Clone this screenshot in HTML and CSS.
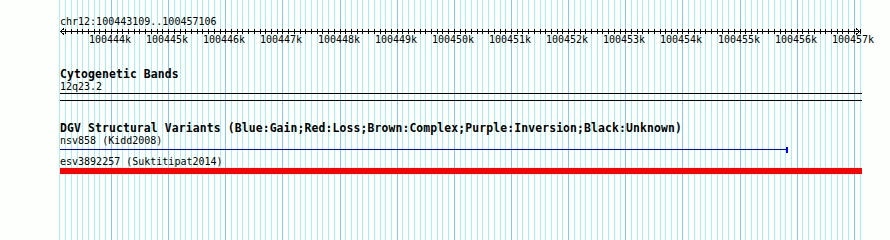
FILE: index.html
```html
<!DOCTYPE html>
<html>
<head>
<meta charset="utf-8">
<link rel="stylesheet" href="styles.css">
</head>
<body>
<div class="page">
  <svg class="grid" id="grid" width="890" height="240"></svg>
  <div class="content">
    <div class="seg">chr12:100443109..100457106</div>
    <div class="ruler">
      <svg class="axis" id="axis" width="802" height="8"></svg>
      <div class="labels" id="labels"></div>
    </div>
    <section class="track cyto">
      <div class="track-title">Cytogenetic Bands</div>
      <div class="feat-label band-label">12q23.2</div>
      <div class="band"></div>
    </section>
    <section class="track dgv">
      <div class="track-title">DGV Structural Variants (Blue:Gain;Red:Loss;Brown:Complex;Purple:Inversion;Black:Unknown)</div>
      <div class="feat-label first">nsv858 (Kidd2008)</div>
      <div class="gain"><div class="gain-line"></div><div class="gain-end"></div></div>
      <div class="feat-label second">esv3892257 (Suktitipat2014)</div>
      <div class="loss"></div>
    </section>
  </div>
</div>
<script src="script.js"></script>
</body>
</html>
```
FILE: styles.css
```css
html, body {
  margin: 0;
  padding: 0;
  background: #fcfffc;
}
.page {
  position: relative;
  width: 890px;
  height: 240px;
  overflow: hidden;
  background: #fcfffc;
  font-family: "DejaVu Sans Mono", "Liberation Mono", monospace;
  font-size: 10px;
  color: #000;
}
.grid {
  position: absolute;
  left: 0;
  top: 0;
  shape-rendering: crispEdges;
}
.content {
  position: relative;
  padding: 15px 0 0 60px;
}
.seg {
  height: 13px;
  line-height: 13px;
  white-space: nowrap;
}
.ruler {
  position: relative;
  width: 800px;
  height: 20px;
}
.axis {
  display: block;
  shape-rendering: crispEdges;
  overflow: visible;
}
.labels {
  position: absolute;
  left: 0;
  top: 5px;
  width: 800px;
  height: 13px;
}
.tick-label {
  position: absolute;
  top: 0;
  line-height: 13px;
  white-space: nowrap;
  transform: translateX(-50%);
}
.track {
  display: flex;
  flex-direction: column;
  align-items: flex-start;
}
.cyto {
  margin-top: 21px;
}
.dgv {
  margin-top: 22px;
}
.track-title {
  font-weight: bold;
  font-size: 11.4px;
  letter-spacing: 0.13px;
  height: 10px;
  line-height: 10px;
  white-space: nowrap;
}
.feat-label {
  height: 11px;
  line-height: 11px;
  white-space: nowrap;
}
.feat-label.band-label {
  margin-top: 2px;
}
.feat-label.first {
  margin-top: 2px;
}
.feat-label.second {
  margin-top: 3px;
}
.band {
  margin-top: 1px;
  width: 802px;
  height: 6px;
  border-top: 1px solid #000;
  border-bottom: 1px solid #000;
}
.gain {
  display: flex;
  align-items: flex-start;
  margin-top: 1px;
  height: 6px;
}
.gain-line {
  width: 726px;
  height: 1px;
  margin-top: 2px;
  background: #0000ff;
}
.gain-end {
  width: 2px;
  height: 6px;
  background: #0000ff;
}
.loss {
  margin-top: 1px;
  width: 802px;
  height: 6px;
  background: #ff0000;
}
```
FILE: script.js
```js
(function () {
  var NS = "http://www.w3.org/2000/svg";
  var start = 100443109, scale = 800 / 13998;
  function X(p) { return Math.round(60 + (p - start) * scale); }
  function el(name, attrs) {
    var e = document.createElementNS(NS, name);
    for (var k in attrs) e.setAttribute(k, attrs[k]);
    return e;
  }
  var grid = document.getElementById("grid");
  for (var p = 100443100; p <= 100457100; p += 100) {
    var major = p % 1000 === 0;
    grid.appendChild(el("line", {
      x1: X(p) + 0.5, x2: X(p) + 0.5, y1: 0, y2: 240,
      stroke: major ? "#87c8f0" : "#aaeeee", "stroke-width": 1
    }));
  }
  var axis = document.getElementById("axis");
  axis.appendChild(el("line", { x1: 0, x2: 800, y1: 3.5, y2: 3.5, stroke: "#000", "stroke-width": 1 }));
  for (var q = 100443200; q <= 100457100; q += 100) {
    var x = X(q) - 60 + 0.5;
    axis.appendChild(el("line", { x1: x, x2: x, y1: 1, y2: 6, stroke: "#000", "stroke-width": 1 }));
  }
  axis.appendChild(el("polyline", { points: "4,0.5 0.5,3.5 4,6.5", fill: "none", stroke: "#000", "stroke-width": 1 }));
  axis.appendChild(el("polyline", { points: "796,0.5 799.5,3.5 796,6.5", fill: "none", stroke: "#000", "stroke-width": 1 }));
  var labels = document.getElementById("labels");
  for (var k = 100444; k <= 100457; k++) {
    var s = document.createElement("span");
    s.className = "tick-label";
    s.style.left = (X(k * 1000) - 61) + "px";
    s.textContent = k + "k";
    labels.appendChild(s);
  }
})();
```
